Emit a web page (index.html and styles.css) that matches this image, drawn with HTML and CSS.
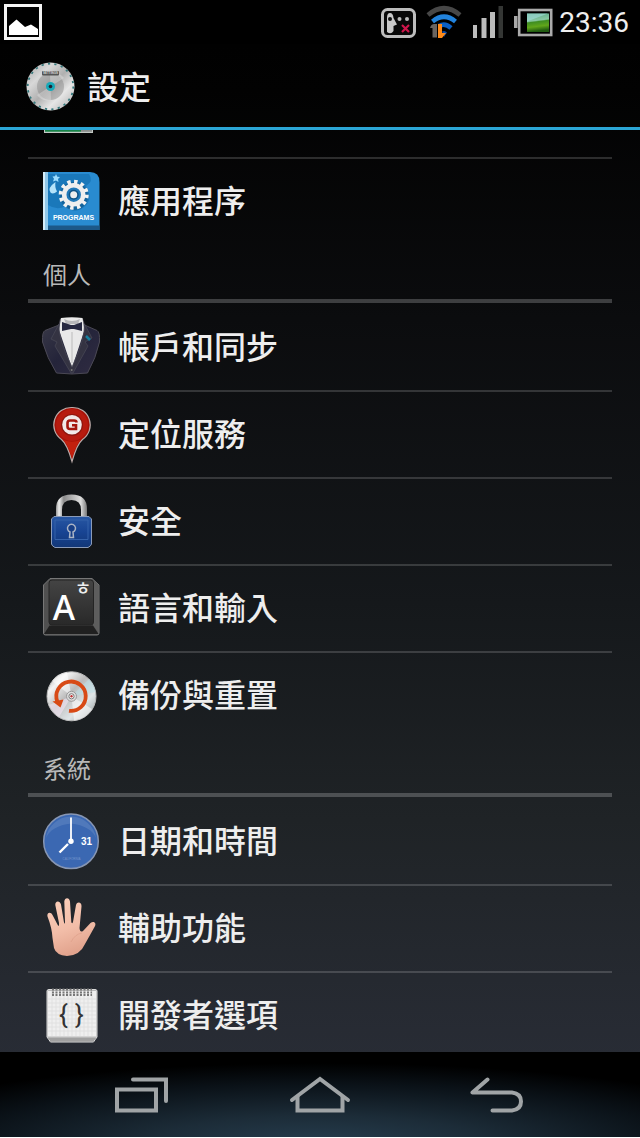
FILE: index.html
```html
<!DOCTYPE html>
<html lang="zh-Hant">
<head>
<meta charset="utf-8">
<meta name="viewport" content="width=device-width, initial-scale=1">
<title>設定</title>
<link rel="stylesheet" href="styles.css">
</head>
<body class="screen">
<div class="status">
  <svg class="status-photo" width="38" height="36" viewBox="0 0 38 36" role="img" aria-label="圖片">
    <rect x="1.5" y="1.5" width="35" height="33" fill="#000" stroke="#f4f4f4" stroke-width="3"/>
    <path d="M5 31V22L12.500 15.500L21 23L27 20.500L34 25V31Z" fill="#fff"/>
  </svg>
  <div class="status-icons">
    <svg width="35" height="32" viewBox="0 0 35 32" role="img" aria-label="震動">
      <rect x="1.500" y="3.500" width="32" height="27" rx="5" fill="#080808" stroke="#bdbdbd" stroke-width="3"/>
      <path d="M6 26V12Q6 7 9 7Q12 7 12.500 12L16 18.500L12.500 20V25Q10 29 6 26Z" fill="#c9c9c9"/>
      <circle cx="9" cy="13" r="2" fill="#111"/><circle cx="18.500" cy="13" r="2" fill="#bbb"/><circle cx="26" cy="13" r="2" fill="#bbb"/>
      <path d="M21 19L28 26M28 19L21 26" stroke="#d0154b" stroke-width="2.200"/>
    </svg>
    <svg width="36" height="32" viewBox="0 0 36 32" role="img" aria-label="Wi-Fi">
      <path d="M2 9Q18 -4.500 34 9" fill="none" stroke="#474747" stroke-width="4.600"/>
      <path d="M6.500 15.500Q18 6 29.500 15.500" fill="none" stroke="#2283dc" stroke-width="4.600"/>
      <path d="M13 20Q19 16.500 25 22" fill="none" stroke="#0b5fc4" stroke-width="4.600"/>
      <path d="M16 25.500Q19 24 21 26.500L18 31Z" fill="#0a4aa8"/>
      <path d="M6.500 31.500V22H4Q5 18 8.500 18H11V31.500Z" fill="#696460"/>
      <path d="M12 18H16V27H20L16 32H12Z" fill="#ff8a18"/>
    </svg>
    <svg width="32" height="32" viewBox="0 0 32 32" role="img" aria-label="訊號">
      <path d="M1 19H5V32H1ZM9.500 12H14.500V32H9.500ZM18 6H23V32H18Z" fill="#bcbcbc"/><path d="M26.500 0H31V32H26.500Z" fill="#343634"/>
    </svg>
    <svg width="39" height="32" viewBox="0 0 39 32" role="img" aria-label="電池">
      <defs><linearGradient id="cell" x1="0" y1="0" x2=".15" y2="1"><stop offset="0" stop-color="#57a984"/><stop offset=".43" stop-color="#8ac8a5"/><stop offset=".5" stop-color="#3f8e22"/><stop offset=".75" stop-color="#61a61a"/><stop offset="1" stop-color="#205b10"/></linearGradient></defs>
      <rect x="0" y="10" width="3.500" height="12" fill="#a8a8a8"/><rect x="5.200" y="4" width="32" height="25" fill="#000" stroke="#aaa" stroke-width="2.600"/>
      <rect x="13" y="7.500" width="22" height="18.500" fill="url(#cell)"/><path d="M13 7.500H34L13 15.500Z" fill="#a5dde0" opacity=".6"/>
    </svg>
    <time class="clock">23:36</time>
  </div>
</div>

<header class="bar">
  <svg width="49" height="49" viewBox="0 0 49 49" aria-hidden="true">
    <defs><linearGradient id="steel" x1="0" y1="0" x2="1" y2="1"><stop offset="0" stop-color="#a5a5a5"/><stop offset=".28" stop-color="#d8d8d8"/><stop offset=".5" stop-color="#b0b0b0"/><stop offset=".7" stop-color="#e6e6e6"/><stop offset="1" stop-color="#a8a8a8"/></linearGradient></defs>
    <circle cx="24.500" cy="24.500" r="24" fill="url(#steel)"/>
    <circle cx="24.500" cy="24.500" r="22.800" fill="none" stroke="#35787c" stroke-width="1.800" stroke-dasharray="2.200 4.311"/>
    <circle cx="24.500" cy="24.500" r="13.500" fill="#858585" opacity=".45"/>
    <path d="M24.500 24.500L11 33Q16 40 25 38ZM24.500 24.500L38 16Q32 9 24 11Z" fill="#eee" opacity=".35"/>
    <rect x="16" y="9" width="17" height="4.500" rx="1" fill="#555"/><text x="24.500" y="12.300" class="tiny tiny--blade">SETTINGS</text>
    <circle cx="24.500" cy="24.500" r="4.500" fill="#18a9b8"/><circle cx="24.500" cy="24.500" r="1.800" fill="#223"/>
  </svg>
  <h1 class="title">設定</h1>
</header>

<main class="list">
  <a class="row row--peek" href="#battery" aria-label="電池">
    <svg width="58" height="3" viewBox="0 0 58 3" aria-hidden="true"><path d="M2 0H51V3H2Z" fill="#c3c9c5"/><path d="M3 0H39V1.800H3Z" fill="#178347"/><path d="M39 0H50V1.800H39Z" fill="#898d8b"/></svg>
  </a>
  <a class="row row--last" href="#apps">
    <svg width="58" height="65" viewBox="0 0 58 65" aria-hidden="true">
      <path d="M1 3H48Q57.500 3 57.500 13V61H1Z" fill="#298bd0"/>
      <path d="M6 5H47Q52 12 44 17Q52 30 42 38Q32 46 24 37Q15 42 6 36Z" fill="#1a78ba"/>
      <path d="M1 3H6V61H1Z" fill="#91c8e9"/><path d="M1 3H3V61H1Z" fill="#d5edf9"/>
      <path d="M6 56.500H57.500V61H6Z" fill="#1c5888"/>
      <path d="M14 5L15.300 7.700L18 8L16 10L16.500 13L14 11.500L11 12.500L12 9.700L10.500 7.500L13 7.300Z" fill="#9bdcff"/>
      <path d="M13.500 13Q5 19 8.500 23.500Q11 26 15 22.500Q12.500 18 13.500 13Z" fill="#b5e3fa"/>
      <circle cx="32" cy="27" r="14" fill="#0e4f80" opacity=".5"/>
      <circle cx="31.700" cy="25.700" r="9.500" fill="#2079b9" stroke="#eee" stroke-width="4.500"/>
      <circle cx="31.700" cy="25.700" r="13" fill="none" stroke="#f2f2f2" stroke-width="4" stroke-dasharray="3.400 3.407"/>
      <circle cx="31.700" cy="25.700" r="5" fill="#105486"/><circle cx="31.700" cy="25.700" r="3.500" fill="#eee"/>
      <text x="31.500" y="51" class="tiny tiny--programs">PROGRAMS</text>
    </svg>
    <span class="label">應用程序</span>
  </a>

  <h2 class="category">個人</h2>
  <a class="row" href="#accounts">
    <svg width="58" height="65" viewBox="0 0 58 65" aria-hidden="true">
      <defs><linearGradient id="suit" x1="0" y1="0" x2="1" y2="1"><stop offset="0" stop-color="#3a3a48"/><stop offset=".5" stop-color="#24243a"/><stop offset="1" stop-color="#302c42"/></linearGradient></defs>
      <path d="M18.500 4L17 10L3 15.500Q0 17 .5 27Q5 43 14.500 58Q30 60 45.500 58Q54 43 57.500 27Q58 17 55 15.500L42.500 10L40.500 4Z" fill="url(#suit)" stroke="#4a4854"/>
      <path d="M19 3Q30 1.500 40.500 3L42.500 15L30 53L17 15Z" fill="#e9e9e9"/>
      <path d="M30 17V48" stroke="#bbb"/><path d="M22 4Q30 8 38 4L36 9H24Z" fill="#b8b8bb"/>
      <path d="M17 9L9 24L15 27L13 31L29 58H31L46 31L43 27L50 23L42.500 9Q43 24 30 52Q16 24 17 9Z" fill="#343342" stroke="#4b4a58" stroke-width=".7"/>
      <path d="M20 7L29 10H32L40 7V16L32 14H29L20 16Z" fill="#272942"/>
      <path d="M44 21L48 25" stroke="#1780a0" stroke-width="2.500"/><circle cx="29.700" cy="55" r="1" fill="#777"/>
    </svg>
    <span class="label">帳戶和同步</span>
  </a>
  <a class="row" href="#location">
    <svg width="58" height="65" viewBox="0 0 58 65" aria-hidden="true">
      <path d="M30 5.500A17.500 17.500 0 0 0 19.500 37.500Q25 42 30 59.500Q35 42 40.500 37.500A17.500 17.500 0 0 0 30 5.500Z" fill="#a81208" stroke="#b9aaa8" stroke-width="1.200"/>
      <circle cx="30" cy="23" r="16" fill="#b71b0f"/><path d="M21.500 38Q30 41.500 38.500 38Q34 43 30 56Q26 43 21.500 38Z" fill="#c2200e"/>
      <circle cx="30" cy="23" r="11" fill="#8e170f"/><circle cx="30" cy="22.700" r="9.800" fill="#f1e9e8"/>
      <path d="M34.500 20.500Q34.500 18.500 32 18.500H28Q25.500 18.500 25.500 21V24.500Q25.500 27 28 27H34V23.300H30" fill="none" stroke="#a5160e" stroke-width="2.600"/>
    </svg>
    <span class="label">定位服務</span>
  </a>
  <a class="row" href="#security">
    <svg width="58" height="65" viewBox="0 0 58 65" aria-hidden="true">
      <defs><linearGradient id="shackle" x1="0" x2="1"><stop offset="0" stop-color="#999"/><stop offset=".1" stop-color="#eee"/><stop offset=".25" stop-color="#8b8b8b"/><stop offset=".8" stop-color="#ddd"/><stop offset="1" stop-color="#777"/></linearGradient><linearGradient id="lock" x2="0" y2="1"><stop offset="0" stop-color="#2857a3"/><stop offset=".5" stop-color="#184493"/><stop offset="1" stop-color="#123777"/></linearGradient></defs>
      <path d="M14 29V20Q14 5.500 29.500 5.500T45 20V29H39V21Q39 11 29.500 11T20 21V29Z" fill="url(#shackle)"/>
      <path d="M12 27.500H47L49.500 30V55Q49 57 46 58.500H13Q10 57 9.500 55V30Z" fill="url(#lock)" stroke="#8b9bb8"/>
      <path d="M13 50.500V31H46V50.500Z" fill="none" stroke="#3562aa"/>
      <path d="M28 43L27.500 48.500H31.500L31 43A4 4 0 1 0 28 43Z" fill="#173e86" stroke="#aab4c5" stroke-width="1.500"/>
    </svg>
    <span class="label">安全</span>
  </a>
  <a class="row" href="#language">
    <svg width="58" height="65" viewBox="0 0 58 65" aria-hidden="true">
      <defs><linearGradient id="key" x2="0" y2="1"><stop offset="0" stop-color="#444"/><stop offset="1" stop-color="#292929"/></linearGradient></defs>
      <path d="M8 2.500H50L57 9V57Q57 59 55 59H3.500Q1.500 59 1.500 57V9Z" fill="#505050" stroke="#777"/>
      <path d="M2 58L7.500 49.500H51L56.500 58Z" fill="#202020"/><path d="M50 3L56.500 9V57L51 49V5Z" fill="#5d5d5d"/>
      <rect x="7" y="4" width="44.500" height="45" rx="3" fill="url(#key)" stroke="#242424"/>
      <text x="22" y="44" class="key-letter">A</text><text x="41" y="19" class="key-jamo">ㅎ</text>
    </svg>
    <span class="label">語言和輸入</span>
  </a>
  <a class="row row--last" href="#backup">
    <svg width="58" height="65" viewBox="0 0 58 65" aria-hidden="true">
      <defs><linearGradient id="disc" x1="0" y1="0" x2="1" y2="1"><stop offset="0" stop-color="#999"/><stop offset=".22" stop-color="#f5f5f5"/><stop offset=".45" stop-color="#bbb"/><stop offset=".7" stop-color="#dfe5e7"/><stop offset="1" stop-color="#8d9496"/></linearGradient></defs>
      <circle cx="29.500" cy="33.300" r="24.500" fill="url(#disc)" stroke="#bbb"/>
      <path d="M29.500 33.300L25 9Q15 10 10 18ZM29.500 33.300L32 57.500Q44 56 50 46Z" fill="#fff" opacity=".55"/>
      <path d="M29.500 33.300L53.500 29Q52 20 47 16Z" fill="#b9e2e9" opacity=".5"/><path d="M29.500 33.300L7 42Q11 50 17 54Z" fill="#f2e4f3" opacity=".6"/>
      <circle cx="29.500" cy="33.300" r="5" fill="#ddd" stroke="#999"/><circle cx="29.500" cy="33.300" r="2.600" fill="#fff" stroke="#777"/><circle cx="29.500" cy="33.300" r="1.200" fill="#b33"/>
      <path d="M27 47.800A14.700 14.700 0 1 0 15.300 38.500" fill="none" stroke="#d84a16" stroke-width="3.800"/>
      <path d="M10.500 38.500L21.500 36.500L18.500 44.500Z" fill="#d84a16"/>
    </svg>
    <span class="label">備份與重置</span>
  </a>

  <h2 class="category">系統</h2>
  <a class="row" href="#date">
    <svg width="58" height="65" viewBox="0 0 58 65" aria-hidden="true">
      <circle cx="29" cy="32.300" r="27.300" fill="#3b68b2" stroke="#8796b3" stroke-width="1.500"/>
      <path d="M4 29A25.300 25.300 0 0 1 54 29Q49 17 29 14.500Q9 17 4 29Z" fill="#587fbe" opacity=".75"/>
      <path d="M29 8.500V32.300" stroke="#fff" stroke-width="1.800"/><path d="M26 35L17.500 43.500" stroke="#fff" stroke-width="2.400"/>
      <circle cx="29" cy="32.300" r="2.700" fill="#fff"/><text x="44.500" y="36" class="tiny tiny--day">31</text><text x="29.500" y="50.500" class="tiny tiny--dial">CALIFORNIA</text>
    </svg>
    <span class="label">日期和時間</span>
  </a>
  <a class="row" href="#accessibility">
    <svg width="58" height="65" viewBox="0 0 58 65" aria-hidden="true">
      <defs><linearGradient id="skin" x1="0" y1="0" x2=".3" y2="1"><stop offset="0" stop-color="#fbd0bc"/><stop offset=".6" stop-color="#f2bda8"/><stop offset="1" stop-color="#e2a48e"/></linearGradient></defs>
      <path d="M10.500 42Q10 32 5.500 20.500C4.500 16 9 15.500 10.500 19L16 29.500Q17.300 31 17 27L13.300 9C13 4.300 18 4.300 19 8.500L22 26.500Q22.700 29 23 26L22.300 5.500C22.500 1 27.500 1 28 5.500L29.300 26Q30 28.500 31 26L34 9C35 5 40 6 39.500 10.500L37.500 32Q38 37 41 35L48.500 27C52 24.500 55 27.500 52.500 31L43 48Q38 59.500 25 60Q14 59 12 52Z" fill="url(#skin)"/>
      <path d="M29 46Q33 38 40 37" fill="none" stroke="#d99882" opacity=".5"/>
    </svg>
    <span class="label">輔助功能</span>
  </a>
  <a class="row row--last" href="#developer">
    <svg width="58" height="65" viewBox="0 0 58 65" aria-hidden="true">
      <path d="M5 8Q5 6.500 7 6.500H53Q55 6.500 55 8V54L51.500 59H8.500L5 54Z" fill="#b9b9b9" stroke="#ddd"/>
      <rect x="6" y="8" width="48" height="45.500" fill="#efefef"/>
      <path d="M6 56H54M8 58H52" stroke="#777" stroke-width=".7"/>
      <path d="M10 8V53M14 8V53M18 8V53M22 8V53M26 8V53M30 8V53M34 8V53M38 8V53M42 8V53M46 8V53M50 8V53M6 16H54M6 20H54M6 24H54M6 28H54M6 32H54M6 36H54M6 40H54M6 44H54M6 48H54" stroke="#ddd" stroke-width=".7"/>
      <path d="M10 6.500H50M10 9.500H50M10 12H50" stroke="#777" stroke-width="1.800" stroke-dasharray="2 1.500"/>
      <text x="21.500" y="40" class="brace">{</text><text x="37.500" y="40" class="brace">}</text>
    </svg>
    <span class="label">開發者選項</span>
  </a>
</main>

<nav class="nav" aria-label="系統導覽">
  <button class="nav-key" type="button" aria-label="最近使用">
    <svg width="60" height="40" viewBox="0 0 60 40"><path d="M5 13.500H44V34.500H5Z"/><path d="M21 3.500H54V25" stroke-linecap="round"/></svg>
  </button>
  <button class="nav-key" type="button" aria-label="首頁">
    <svg width="60" height="40" viewBox="0 0 60 40"><path d="M2 24L30 3L58 24" stroke-linecap="round"/><path d="M7.500 20V34.500H52.500V20"/></svg>
  </button>
  <button class="nav-key" type="button" aria-label="返回">
    <svg width="60" height="40" viewBox="0 0 60 40"><path d="M19.500 3.500L4.500 16.500H44Q53 17.500 53 25.500T44 34.500H24.500" stroke-linecap="round" stroke-linejoin="round"/></svg>
  </button>
</nav>
</body>
</html>
```

FILE: styles.css
```css
* { box-sizing: border-box; }

.screen {
  display: flex;
  flex-direction: column;
  height: 100vh;
  margin: 0;
  overflow: hidden;
  background: linear-gradient(#000 0%, #020202 8%, #0b0c0e 28%, #15181b 53%, #1f2326 72%, #282c35 93%);
  color: #eee;
  font-family: Roboto, "Noto Sans CJK TC", sans-serif;
}

svg { display: block; flex: none; overflow: visible; }

.status {
  display: flex;
  flex: none;
  justify-content: space-between;
  align-items: center;
  height: 44px;
  padding: 0 11px 0 4px;
  background: #000;
}

.status-icons { display: flex; align-items: center; gap: 10px; }

.clock { margin-left: -4px; padding-top: 2px; font-size: 28px; line-height: 42px; }

.bar {
  display: flex;
  flex: none;
  align-items: center;
  gap: 12px;
  height: 86px;
  padding: 2px 26px 0;
  border-bottom: 3px solid #2ba6d6;
}

.title { margin: 0; padding-top: 2px; font-size: 32px; font-weight: 500; line-height: 48px; }

.list { flex: 1; min-height: 0; padding: 0 28px; overflow: hidden; }

.row {
  display: flex;
  align-items: center;
  gap: 18px;
  height: 87px;
  padding: 0 14px;
  border-bottom: 2px solid rgba(255, 255, 255, 0.16);
  color: inherit;
  text-decoration: none;
}

.row--peek { align-items: flex-start; height: 29px; }
.row--last { height: 85px; border-bottom: 0; }

.label { font-size: 32px; font-weight: 500; line-height: 48px; padding-top: 1px; white-space: nowrap; }

.category {
  height: 59px;
  margin: 0 0 2px;
  padding: 14px 15px 0;
  border-bottom: 4px solid rgba(255, 255, 255, 0.21);
  color: #b8b8b8;
  font-size: 24px;
  font-weight: 400;
  line-height: 36px;
}

.nav {
  display: grid;
  flex: none;
  grid-template-columns: repeat(3, 1fr);
  height: 86px;
  padding: 0 53px;
  border-bottom: 1px solid #fff;
  background: radial-gradient(ellipse 75% 95% at 50% 108%, #263d4e 0%, #1c2c38 35%, #0a1117 75%, #000 100%);
}

.nav-key {
  display: flex;
  align-items: center;
  justify-content: center;
  padding: 2px 0 0;
  border: 0;
  background: none;
}

.nav-key svg { fill: none; stroke: #a0a4a6; stroke-width: 4px; }

.tiny { font-family: "Liberation Sans", sans-serif; font-weight: 700; text-anchor: middle; }
.tiny--blade { fill: #ddd; font-size: 3px; }
.tiny--programs { fill: #fff; font-size: 7px; }
.tiny--day { fill: #fff; font-size: 10px; }
.tiny--dial { fill: #7294cb; font-size: 3px; font-weight: 400; }

.key-letter { fill: #fff; font-family: "Noto Sans", sans-serif; font-size: 34px; font-weight: 500; text-anchor: middle; }
.key-jamo { fill: #eee; font-family: "Noto Sans CJK KR", sans-serif; font-size: 18px; font-weight: 500; text-anchor: middle; }
.brace { fill: #333; font-family: Roboto, sans-serif; font-size: 26px; text-anchor: middle; }
```
